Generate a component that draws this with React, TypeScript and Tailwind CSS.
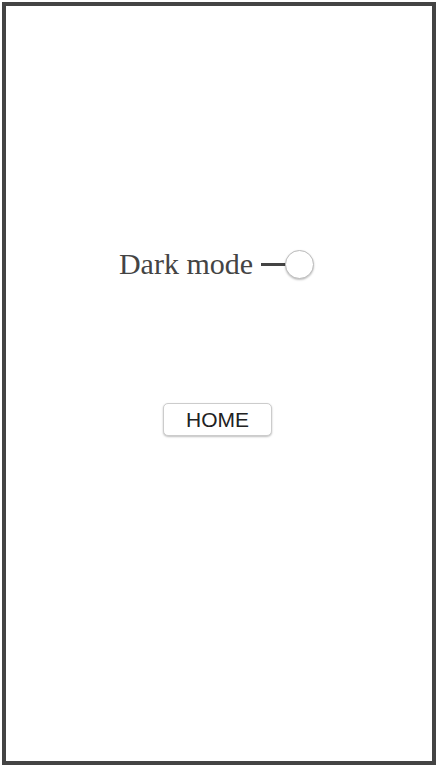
export default function App() {
  return (
    <div className="bg-white w-[438px] h-[768px] p-[2px]">
      <div className="w-[434px] h-[763px] border-4 border-[#444] flex flex-col items-center">
        <div className="mt-[243px] -ml-[5px] flex items-center h-[30px]">
          <span className="font-['Liberation_Serif',serif] text-[30px] leading-none text-[#444]">Dark mode</span>
          <span className="ml-[8px] w-[25px] h-[3px] bg-[#444]" />
          <span className="-ml-[1px] w-[29px] h-[29px] rounded-full bg-white border border-[#bbb] shadow-[0_1px_2px_rgba(0,0,0,0.25)]" />
        </div>
        <button className="mt-[124px] -ml-[3px] w-[109px] h-[33px] rounded-[5px] border border-[#ccc] bg-white shadow-[0_1px_2px_rgba(0,0,0,0.25)] font-['Liberation_Sans',sans-serif] text-[21px] leading-none text-[#222]">
          HOME
        </button>
      </div>
    </div>
  )
}
